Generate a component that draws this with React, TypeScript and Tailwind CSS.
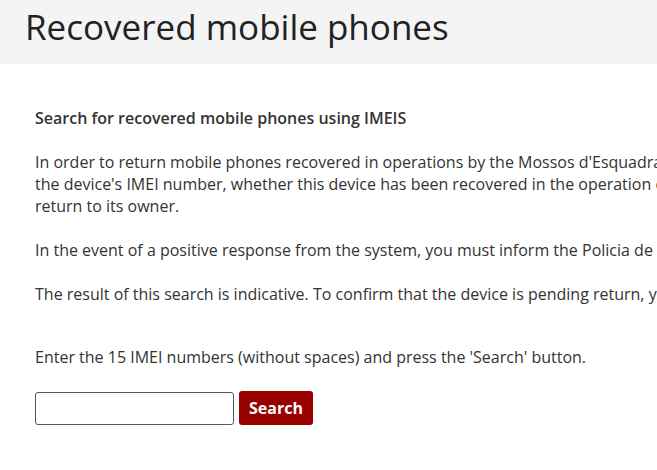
export default function App() {
  return (
    <div className="min-h-[470px] w-[657px] overflow-hidden bg-white font-['Open_Sans',sans-serif] text-[#333]">
      <header className="h-16 bg-[#f4f4f4] pl-[25px] pt-[3px]">
        <h1 className="whitespace-nowrap text-[35px] font-normal leading-[48px] text-[#222]">Recovered mobile phones</h1>
      </header>

      <main className="w-[1000px] px-[35px] pt-[43px] text-[16px] leading-[22px]">
        <h2 className="font-semibold">Search for recovered mobile phones using IMEIS</h2>

        <p className="mt-[22px] whitespace-nowrap">
          In order to return mobile phones recovered in operations by the Mossos d'Esquadra to their legitimate owners, this service allows you to check, using
          <br />
          the device's IMEI number, whether this device has been recovered in the operation carried out by the police and is currently pending its
          <br />
          return to its owner.
        </p>

        <p className="mt-[22px] whitespace-nowrap">
          In the event of a positive response from the system, you must inform the Policia de la Generalitat - Mossos d'Esquadra to arrange the return.
        </p>

        <p className="mt-[22px] whitespace-nowrap">
          The result of this search is indicative. To confirm that the device is pending return, you must go to a police station with the purchase invoice.
        </p>

        <p className="mt-[41px] whitespace-nowrap">Enter the 15 IMEI numbers (without spaces) and press the 'Search' button.</p>

        <form className="mt-[23px] flex items-center gap-[5px]" onSubmit={e => e.preventDefault()}>
          <input
            type="text"
            maxLength={15}
            className="h-[33px] w-[199px] rounded-[3px] border border-[#555] bg-white px-2 text-[16px] outline-none"
          />
          <button
            type="submit"
            className="h-[34px] w-[74px] rounded-[3px] bg-[#990000] text-[16px] font-bold text-white"
          >
            Search
          </button>
        </form>
      </main>
    </div>
  )
}
